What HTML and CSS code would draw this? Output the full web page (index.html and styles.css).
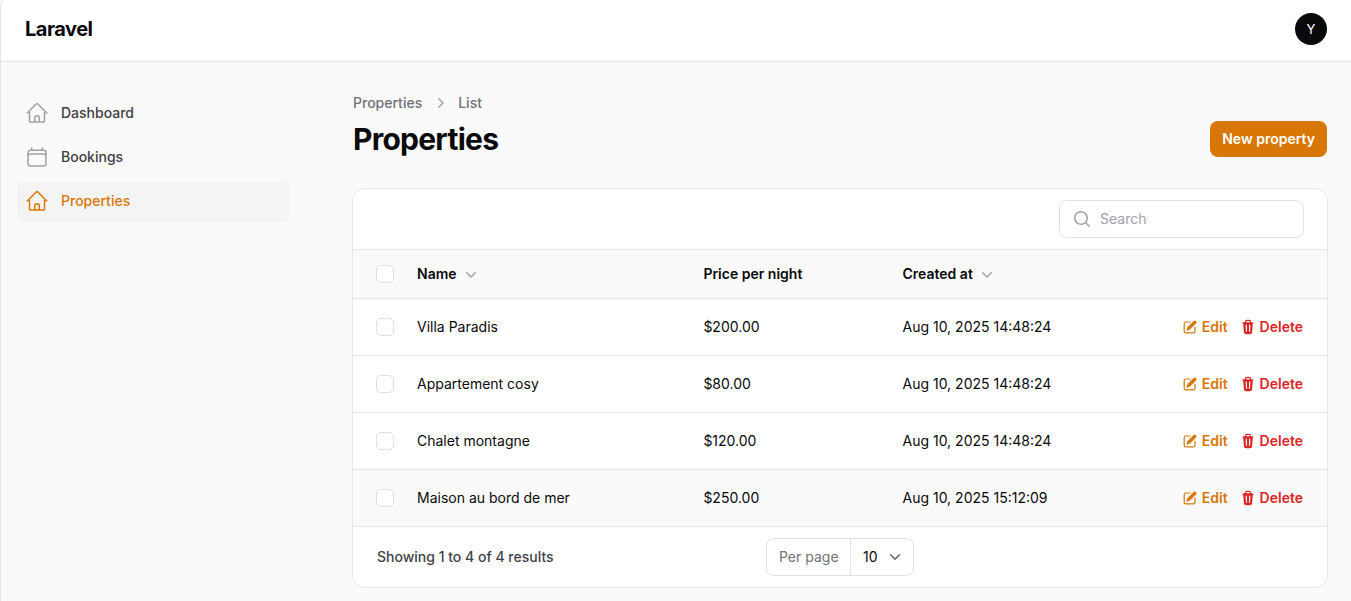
FILE: index.html
```html
<!DOCTYPE html>
<html lang="en">
<head>
<meta charset="utf-8">
<title>Properties - Laravel</title>
<link rel="stylesheet" href="styles.css">
</head>
<body>
<svg class="sprite" aria-hidden="true">
  <symbol id="home" viewBox="0 0 24 24"><path d="m2.25 12 8.954-8.955c.44-.439 1.152-.439 1.591 0L21.75 12M4.5 9.75v10.125c0 .621.504 1.125 1.125 1.125H9.75v-4.875c0-.621.504-1.125 1.125-1.125h2.25c.621 0 1.125.504 1.125 1.125V21h4.125c.621 0 1.125-.504 1.125-1.125V9.75M8.25 21h8.25"/></symbol>
  <symbol id="calendar" viewBox="0 0 24 24"><path d="M6.75 3v2.25M17.25 3v2.25M3 18.75V7.5a2.25 2.25 0 0 1 2.25-2.25h13.5A2.25 2.25 0 0 1 21 7.5v11.25m-18 0A2.25 2.25 0 0 0 5.25 21h13.5A2.25 2.25 0 0 0 21 18.75m-18 0v-7.5A2.25 2.25 0 0 1 5.25 9h13.5A2.25 2.25 0 0 1 21 11.25v7.5"/></symbol>
  <symbol id="down" viewBox="0 0 20 20"><path fill-rule="evenodd" d="M5.22 8.22a.75.75 0 0 1 1.06 0L10 11.94l3.72-3.72a.75.75 0 1 1 1.06 1.06l-4.25 4.25a.75.75 0 0 1-1.06 0L5.22 9.28a.75.75 0 0 1 0-1.06Z"/></symbol>
  <symbol id="right" viewBox="0 0 20 20"><path fill-rule="evenodd" d="M8.22 5.22a.75.75 0 0 1 1.06 0l4.25 4.25a.75.75 0 0 1 0 1.06l-4.25 4.25a.75.75 0 0 1-1.06-1.06L11.94 10 8.22 6.28a.75.75 0 0 1 0-1.06Z"/></symbol>
  <symbol id="search" viewBox="0 0 20 20"><path fill-rule="evenodd" d="M9 3.5a5.5 5.5 0 1 0 0 11 5.5 5.5 0 0 0 0-11ZM2 9a7 7 0 1 1 12.452 4.391l3.328 3.329a.75.75 0 1 1-1.06 1.06l-3.329-3.328A7 7 0 0 1 2 9Z"/></symbol>
  <symbol id="edit" viewBox="0 0 20 20"><path d="m5.433 13.917 1.262-3.155A4 4 0 0 1 7.58 9.42l6.92-6.918a2.121 2.121 0 0 1 3 3l-6.92 6.918c-.383.383-.84.685-1.343.886l-3.154 1.262a.5.5 0 0 1-.65-.65Z"/><path d="M3.5 5.75c0-.69.56-1.25 1.25-1.25H10A.75.75 0 0 0 10 3H4.75A2.75 2.75 0 0 0 2 5.75v9.5A2.75 2.75 0 0 0 4.75 18h9.5A2.75 2.75 0 0 0 17 15.25V10a.75.75 0 0 0-1.5 0v5.25c0 .69-.56 1.25-1.25 1.25h-9.5c-.69 0-1.25-.56-1.25-1.25v-9.5Z"/></symbol>
  <symbol id="trash" viewBox="0 0 20 20"><path fill-rule="evenodd" d="M8.75 1A2.75 2.75 0 0 0 6 3.75v.443c-.795.077-1.584.176-2.365.298a.75.75 0 1 0 .23 1.482l.149-.022.841 10.518A2.75 2.75 0 0 0 7.596 19h4.807a2.75 2.75 0 0 0 2.742-2.53l.841-10.52.149.023a.75.75 0 0 0 .23-1.482A41.03 41.03 0 0 0 14 4.193V3.75A2.75 2.75 0 0 0 11.25 1h-2.5ZM10 4c.84 0 1.673.025 2.5.075V3.75c0-.69-.56-1.25-1.25-1.25h-2.5c-.69 0-1.25.56-1.25 1.25v.325C8.327 4.025 9.16 4 10 4ZM8.58 7.72a.75.75 0 0 0-1.5.06l.3 7.5a.75.75 0 1 0 1.5-.06l-.3-7.5Zm4.34.06a.75.75 0 1 0-1.5-.06l-.3 7.5a.75.75 0 1 0 1.5.06l.3-7.5Z"/></symbol>
</svg>
<div class="app">
  <header class="topbar">
    <div class="logo">Laravel</div>
    <div class="avatar">Y</div>
  </header>
  <div class="layout">
    <nav class="sidebar">
      <a class="nav-item"><svg class="nav-icon"><use href="#home"/></svg>Dashboard</a>
      <a class="nav-item"><svg class="nav-icon"><use href="#calendar"/></svg>Bookings</a>
      <a class="nav-item active"><svg class="nav-icon"><use href="#home"/></svg>Properties</a>
    </nav>
    <main class="main">
      <div class="page-header">
        <div>
          <div class="breadcrumbs"><span>Properties</span><svg class="icon20"><use href="#right"/></svg><span>List</span></div>
          <h1 class="title">Properties</h1>
        </div>
        <button class="primary">New property</button>
      </div>
      <section class="card">
        <div class="toolbar">
          <div class="search"><svg class="icon20"><use href="#search"/></svg><span>Search</span></div>
        </div>
        <div class="row head">
          <i class="check"></i><div class="cell">Name<svg class="icon16"><use href="#down"/></svg></div><div class="cell">Price per night</div><div class="cell">Created at<svg class="icon16"><use href="#down"/></svg></div>
        </div>
        <div class="row">
          <i class="check"></i><div class="cell">Villa Paradis</div><div class="cell">$200.00</div><div class="cell">Aug 10, 2025 14:48:24</div>
          <div class="actions"><a class="action edit"><svg class="icon16"><use href="#edit"/></svg>Edit</a><a class="action delete"><svg class="icon16"><use href="#trash"/></svg>Delete</a></div>
        </div>
        <div class="row">
          <i class="check"></i><div class="cell">Appartement cosy</div><div class="cell">$80.00</div><div class="cell">Aug 10, 2025 14:48:24</div>
          <div class="actions"><a class="action edit"><svg class="icon16"><use href="#edit"/></svg>Edit</a><a class="action delete"><svg class="icon16"><use href="#trash"/></svg>Delete</a></div>
        </div>
        <div class="row">
          <i class="check"></i><div class="cell">Chalet montagne</div><div class="cell">$120.00</div><div class="cell">Aug 10, 2025 14:48:24</div>
          <div class="actions"><a class="action edit"><svg class="icon16"><use href="#edit"/></svg>Edit</a><a class="action delete"><svg class="icon16"><use href="#trash"/></svg>Delete</a></div>
        </div>
        <div class="row hover">
          <i class="check"></i><div class="cell">Maison au bord de mer</div><div class="cell">$250.00</div><div class="cell">Aug 10, 2025 15:12:09</div>
          <div class="actions"><a class="action edit"><svg class="icon16"><use href="#edit"/></svg>Edit</a><a class="action delete"><svg class="icon16"><use href="#trash"/></svg>Delete</a></div>
        </div>
        <footer class="footer">
          <span>Showing 1 to 4 of 4 results</span>
          <div class="per-page"><span class="per-label">Per page</span><span class="per-value">10<svg class="chev" viewBox="0 0 20 20"><path d="m6 8 4 4 4-4"/></svg></span></div>
        </footer>
      </section>
    </main>
  </div>
</div>
</body>
</html>
```

FILE: styles.css
```css
* { box-sizing: border-box; }
body {
  margin: 0;
  height: 601px;
  overflow: hidden;
  background: #fafafa;
  color: #09090b;
  font: 14px/20px Inter, sans-serif;
}
svg { fill: currentColor; flex: none; }
.sprite { display: none; }
.app {
  height: 601px;
  border-left: 1px solid #e4e4e5;
  border-top-left-radius: 6px;
  overflow: hidden;
}
.topbar {
  height: 62px;
  padding: 0 24px 4px;
  display: flex;
  align-items: center;
  justify-content: space-between;
  background: #fff;
  border-bottom: 1px solid #e4e4e5;
}
.logo { font-size: 20px; font-weight: 700; letter-spacing: -0.5px; }
.avatar {
  width: 32px;
  height: 32px;
  border-radius: 50%;
  background: #09090b;
  color: #fff;
  font-size: 13px;
  display: grid;
  place-items: center;
}
.layout { display: flex; }
.sidebar {
  width: 320px;
  padding: 31px 31px 0 16px;
  display: flex;
  flex-direction: column;
  gap: 4px;
}
.nav-item {
  height: 40px;
  padding: 0 8px;
  display: flex;
  align-items: center;
  gap: 12px;
  border-radius: 8px;
  color: #3f3f46;
  font-weight: 500;
}
.nav-icon {
  width: 24px;
  height: 24px;
  fill: none;
  stroke: #a1a1aa;
  stroke-width: 1.5;
  stroke-linecap: round;
  stroke-linejoin: round;
}
.active { background: #f4f4f5; color: #d97706; }
.active .nav-icon { stroke: currentColor; }
.main { flex: 1; padding: 31px 23px 0 31px; }
.page-header {
  height: 95px;
  padding: 0 1px;
  display: flex;
  justify-content: space-between;
}
.breadcrumbs {
  display: flex;
  gap: 8px;
  color: #71717a;
  font-weight: 500;
}
.icon20 { width: 20px; height: 20px; color: #a1a1aa; }
.title {
  margin: 8px 0 0;
  font-size: 30px;
  line-height: 36px;
  font-weight: 700;
  letter-spacing: -0.75px;
}
.primary {
  height: 36px;
  margin-top: 28px;
  padding: 0 12px;
  border: 0;
  border-radius: 8px;
  background: #d97706;
  color: #fff;
  font: 600 14px/20px Inter, sans-serif;
}
.card {
  height: 400px;
  border: 1px solid #e7e7e8;
  border-radius: 13px;
  background: #fff;
  overflow: hidden;
}
.toolbar {
  height: 60px;
  padding: 0 23px;
  display: flex;
  align-items: center;
  justify-content: flex-end;
}
.search {
  width: 245px;
  height: 38px;
  padding: 0 12px;
  display: flex;
  align-items: center;
  gap: 8px;
  border: 1px solid #e0e0e2;
  border-radius: 8px;
  color: #a1a1aa;
}
.row {
  height: 57px;
  padding: 0 24px 0 23px;
  display: grid;
  grid-template-columns: 41px 286.4px 199.1px 200px 1fr;
  align-items: center;
  border-top: 1px solid #e4e4e5;
}
.row.head { height: 49px; background: #fafafa; font-weight: 600; }
.row.hover { background: #fafafa; }
.check {
  width: 18px;
  height: 18px;
  border: 1px solid #dedee0;
  border-radius: 5px;
  background: #fff;
}
.cell { display: flex; align-items: center; white-space: nowrap; }
.icon16 { width: 16px; height: 16px; }
.cell .icon16 { width: 20px; height: 20px; margin-left: 4px; color: #a1a1aa; }
.actions { display: flex; justify-content: flex-end; gap: 12px; font-weight: 600; }
.action { display: flex; align-items: center; gap: 4px; }
.edit { color: #d97706; }
.delete { color: #dc2626; }
.footer {
  height: 61px;
  padding: 0 24px;
  display: grid;
  grid-template-columns: 1fr auto 1fr;
  align-items: center;
  border-top: 1px solid #e4e4e5;
  color: #3f3f46;
  font-weight: 500;
}
.per-page {
  width: 148px;
  height: 38px;
  display: flex;
  border: 1px solid #e0e0e2;
  border-radius: 8px;
  color: #71717a;
  font-weight: 400;
}
.per-label {
  width: 84px;
  padding: 8px 0 0 12px;
  border-right: 1px solid #e4e4e5;
}
.per-value {
  flex: 1;
  padding-left: 12px;
  display: flex;
  align-items: center;
  gap: 6px;
  color: #09090b;
}
.chev {
  width: 22px;
  height: 22px;
  fill: none;
  stroke: #6b7280;
  stroke-width: 1.5;
  stroke-linecap: round;
  stroke-linejoin: round;
}
```
